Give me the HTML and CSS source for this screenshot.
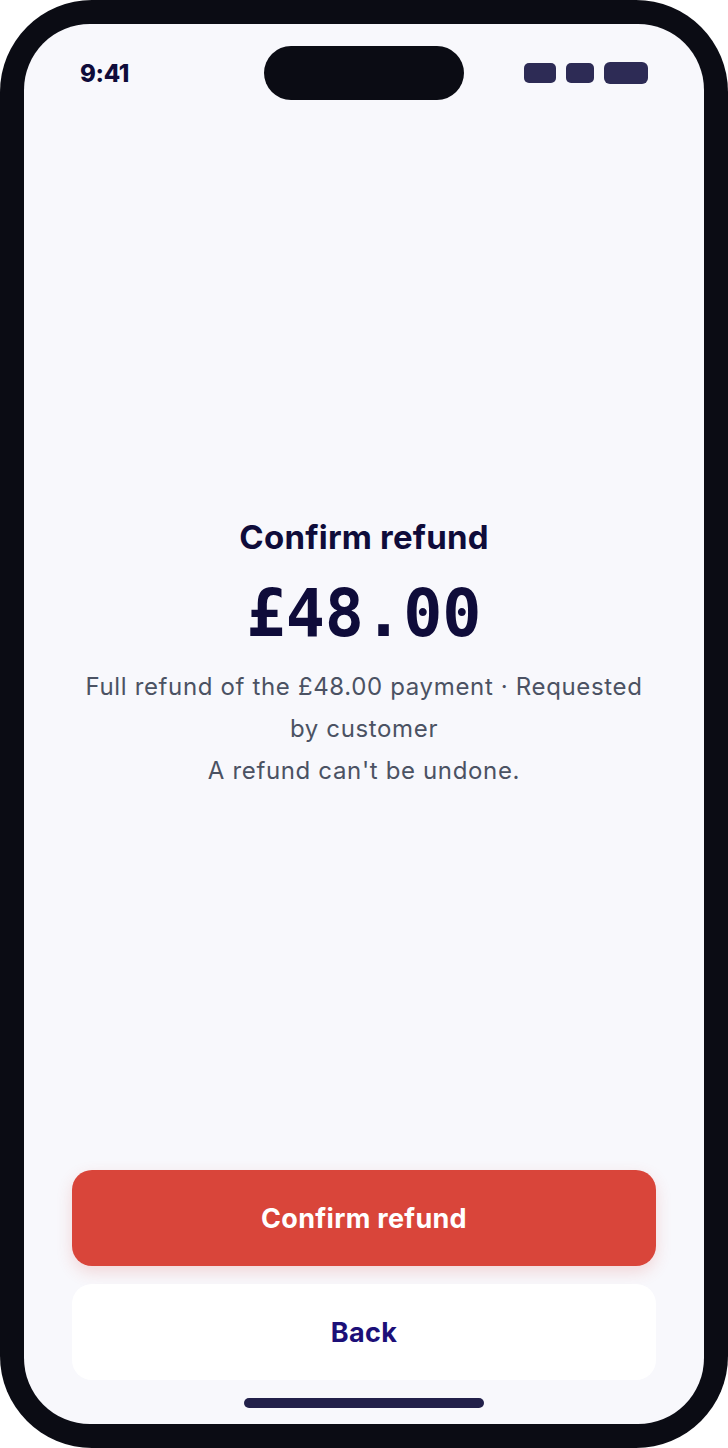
FILE: index.html
```html
<!DOCTYPE html>
<html lang="en">
<head>
<meta charset="utf-8">
<title>Confirm refund</title>
<link rel="stylesheet" href="styles.css">
</head>
<body>
<div class="phone">
  <div class="screen">
    <div class="status">
      <span class="time">9:41</span>
      <span class="island"></span>
      <span class="icons">
        <span class="ic ic-signal"></span>
        <span class="ic ic-wifi"></span>
        <span class="ic ic-battery"></span>
      </span>
    </div>
    <main class="main">
      <h1 class="title">Confirm refund</h1>
      <div class="amount">£48.00</div>
      <p class="desc">Full refund of the £48.00 payment · Requested by customer<br>A refund can't be undone.</p>
    </main>
    <div class="actions">
      <button class="btn btn-danger">Confirm refund</button>
      <button class="btn btn-plain">Back</button>
    </div>
    <div class="home"></div>
  </div>
</div>
</body>
</html>
```
FILE: styles.css
```css
* { box-sizing: border-box; }
html, body { margin: 0; padding: 0; background: #ffffff; }
body { width: 728px; height: 1448px; overflow: hidden; font-family: Inter, "Noto Sans", sans-serif; }

.phone {
  width: 728px;
  height: 1448px;
  background: #0b0c14;
  border-radius: 92px;
  padding: 24px;
}
.screen {
  height: 1400px;
  background: #f8f8fc;
  border-radius: 66px;
  display: flex;
  flex-direction: column;
  overflow: hidden;
}

.status {
  margin-top: 22px;
  height: 54px;
  padding: 0 56px;
  display: grid;
  grid-template-columns: 1fr auto 1fr;
  align-items: center;
}
.time {
  font-weight: 800;
  font-size: 24px;
  color: #0f0c3a;
  letter-spacing: -0.3px;
}
.island {
  width: 200px;
  height: 54px;
  border-radius: 27px;
  background: #0b0c14;
}
.icons {
  display: flex;
  justify-content: flex-end;
  align-items: center;
  gap: 10px;
}
.ic { display: block; background: #2d2b55; border-radius: 5px; }
.ic-signal { width: 32px; height: 20px; }
.ic-wifi { width: 28px; height: 20px; }
.ic-battery { width: 44px; height: 22px; border-radius: 6px; }

.main {
  flex: 1;
  display: flex;
  flex-direction: column;
  justify-content: center;
  align-items: center;
  padding: 38px 55px 0;
  text-align: center;
}
.title {
  margin: 0;
  font-size: 33px;
  line-height: 40px;
  font-weight: 700;
  color: #0f0c3a;
  letter-spacing: 0.2px;
}
.amount {
  margin-top: 19px;
  font-family: "DejaVu Sans Mono", "Liberation Mono", monospace;
  font-weight: 700;
  font-size: 65px;
  line-height: 76px;
  color: #0f0c3a;
}
.desc {
  margin: 14px 0 0;
  font-size: 24px;
  line-height: 42px;
  letter-spacing: 0.65px;
  color: #4b5263;
}

.actions {
  padding: 0 48px;
  display: flex;
  flex-direction: column;
  gap: 18px;
}
.btn {
  height: 96px;
  border: 0;
  border-radius: 20px;
  font-family: Inter, "Noto Sans", sans-serif;
  font-size: 27px;
  font-weight: 700;
  letter-spacing: 0.3px;
}
.btn-danger {
  background: #d9453a;
  color: #ffffff;
  box-shadow: 0 6px 16px rgba(217, 69, 58, 0.18);
}
.btn-plain {
  background: #ffffff;
  color: #1c0f78;
}

.home {
  width: 240px;
  height: 10px;
  border-radius: 5px;
  background: #22204a;
  margin: 18px auto 16px;
}
```
